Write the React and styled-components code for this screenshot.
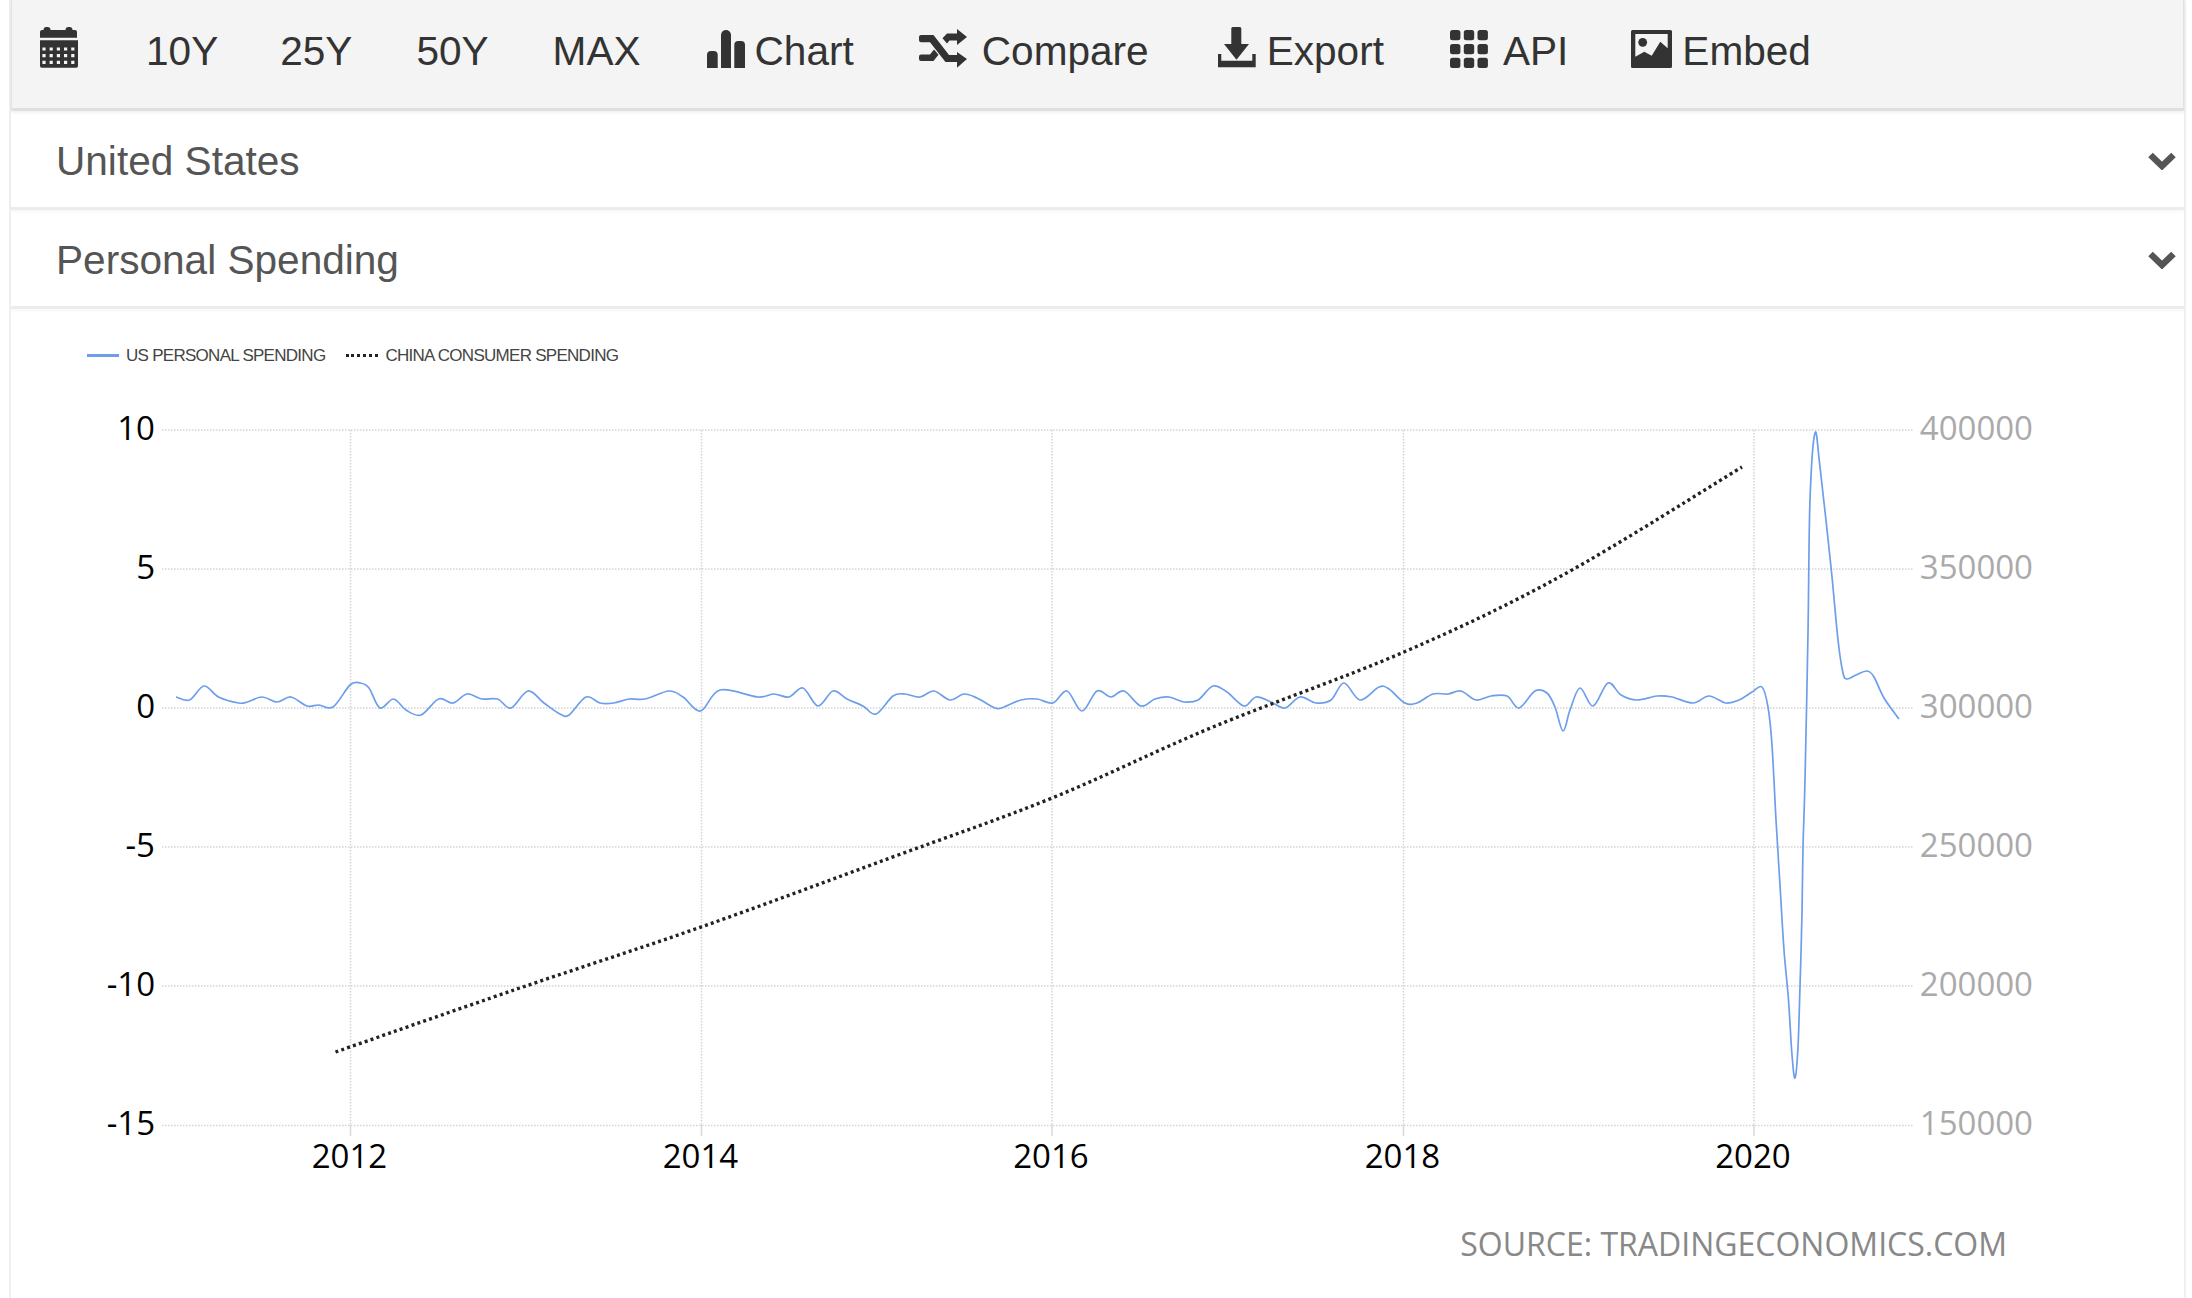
import React from "react";
import styled, { createGlobalStyle } from "styled-components";

const Global = createGlobalStyle`
  html, body { margin: 0; padding: 0; background: #fff; }
  * { box-sizing: border-box; }
`;

const Page = styled.div`
  width: 100%;
  height: 1298px;
  padding: 0 6px 0 9px;
  overflow: hidden;
  background: #fff;
  font-family: "Liberation Sans", Arial, sans-serif;
`;
const Panel = styled.div`
  height: 100%;
  border-left: 2px solid #f0f0f0;
  border-right: 2px solid #f0f0f0;
`;
const Toolbar = styled.nav`
  height: 111px;
  padding: 27px 0 0 28px;
  display: flex;
  gap: 64px;
  background: #f4f4f4;
  border-left: 1px solid #e2e2e2;
  border-right: 1px solid #e2e2e2;
  border-bottom: 3px solid #e0e0e0;
  box-shadow: 0 2px 3px rgba(0, 0, 0, 0.06);
  position: relative;
  color: #333;
`;
const ToolItem = styled.a`
  display: flex;
  align-items: flex-end;
  height: 41px;
  gap: ${(p) => p.$gap || 10}px;
  margin-right: ${(p) => p.$after || 0}px;
  white-space: nowrap;
`;
const ToolLabel = styled.span`
  align-self: flex-start;
  font-size: 40.6px;
  line-height: 49px;
  color: #333;
`;
const Row = styled.div`
  height: 99px;
  padding: 0 8px 0 45px;
  display: flex;
  align-items: center;
  justify-content: space-between;
  border-bottom: 3px solid #ececef;
  box-shadow: 0 2px 3px rgba(0, 0, 0, 0.03);
`;
const RowTitle = styled.span`
  font-size: 40.6px;
  line-height: 46px;
  margin-top: 4px;
  color: #555;
`;
const Chevron = styled.svg`
  display: block;
  margin-top: 4px;
`;
const ChartArea = styled.section`
  display: flex;
  flex-direction: column;
`;
const Legend = styled.div`
  display: flex;
  align-items: center;
  gap: 21px;
  height: 20px;
  margin: 37px 0 0 76px;
`;
const LegendItem = styled.div`
  display: flex;
  align-items: center;
  gap: 7px;
  font-size: 17px;
  line-height: 20px;
  color: #444;
  letter-spacing: -0.72px;
`;
const Swatch = styled.span`
  width: 32px;
  height: 0;
  margin-top: -1px;
  border-top: ${(p) => (p.$dotted ? "3px dotted #222" : "3px solid #6d9eeb")};
`;
const ChartSvg = styled.svg`
  display: block;
  margin-top: 9px;
`;
const Source = styled.div`
  margin-top: 34px;
  padding-right: 177px;
  text-align: right;
  font-family: "Open Sans", sans-serif;
  font-size: 32px;
  line-height: 40px;
  color: #888;
`;

const DARK = "#333";

const CalendarIcon = () => (
  <svg width="38" height="41" viewBox="0 0 38 41" fill={DARK}>
    <path d="M0 5a2 2 0 0 1 2-2h1.5V3a3 3 0 0 1 3-3h1a3 3 0 0 1 3 3h15a3 3 0 0 1 3-3h1a3 3 0 0 1 3 3h2.500a2 2 0 0 1 2 2v5.700H0z" />
    <path fillRule="evenodd" d={"M0 13.300h38V39a1.700 1.700 0 0 1-1.700 1.700H1.700A1.700 1.700 0 0 1 0 39z" + [22, 28.7, 35.4].map((y) => [4, 11.2, 18.4, 25.6, 32.8].map((x) => `M${x - 1.6} ${y - 1.6}h3.200v3.200h-3.200z`).join("")).join("")} />
  </svg>
);
const ChartIcon = () => (
  <svg width="38" height="38" viewBox="0 0 38 38" fill={DARK}>
    <path d="M0 38V25a4 4 0 0 1 4-4h2.700a4 4 0 0 1 4 4v13z" />
    <path d="M14 38V5a5 5 0 0 1 5-5a5 5 0 0 1 5 5v33z" />
    <path d="M27.300 38V15a4 4 0 0 1 4-4h2.700a4 4 0 0 1 4 4v23z" />
  </svg>
);
const CompareIcon = () => (
  <svg width="48" height="39" viewBox="0 0 48 39" fill={DARK}>
    <path d="M38 0l10 8-10 8V11.500h-7.500L28 14.500l-4.500-5.200L28 4.500h10z" />
    <path d="M38 23l10 7-10 8.700V33H26.500L11 13.300H2a2 2 0 0 1-2-2V8a2 2 0 0 1 2-2h12.500L30 26h8z" />
    <path d="M2 25.500h9l4-5 4.500 5.300L14.500 32H2a2 2 0 0 1-2-2v-2.500a2 2 0 0 1 2-2z" />
  </svg>
);
const ExportIcon = () => (
  <svg width="38" height="41" viewBox="0 0 38 41" fill={DARK}>
    <path d="M13.300 1.500a1.500 1.500 0 0 1 1.500-1.500h7a1.500 1.500 0 0 1 1.500 1.500V17H31L18.500 32.700 6 17h7.300z" />
    <path d="M0 27h3.300v6.700h31V27h3.400v13.300H0z" />
  </svg>
);
const ApiIcon = () => (
  <svg width="38" height="38" viewBox="0 0 38 38" fill={DARK}>
    {[0, 14, 27.7].map((y) =>
      [0, 13.8, 27.5].map((x) => <rect key={`${x}-${y}`} x={x} y={y} width="10.400" height="10.300" rx="2.500" />)
    )}
  </svg>
);
const EmbedIcon = () => (
  <svg width="41" height="38" viewBox="0 0 41 38" fill={DARK}>
    <path fillRule="evenodd" d="M1.500 0h38A1.500 1.500 0 0 1 41 1.500V36.500A1.500 1.500 0 0 1 39.500 38h-38A1.500 1.500 0 0 1 0 36.500V1.500A1.500 1.500 0 0 1 1.500 0zM4.300 4v22.700l9-5 7.400 4 8.600-14 7.400 6.600V4z" />
    <circle cx="11.700" cy="12.300" r="4.400" />
  </svg>
);
const ChevronIcon = () => (
  <Chevron width="28" height="18" viewBox="0 0 28 18">
    <path d="M2.500 3L14 14L25.500 3" fill="none" stroke="#555" strokeWidth="6.500" />
  </Chevron>
);

const blue = [
  [176, 697], [189.5, 700], [204, 686], [218.5, 697], [238.6, 703], [247.5, 702], [262, 697], [277, 702], [291, 697],
  [307, 706], [319, 705], [333, 707], [350, 685], [360, 683], [369, 688], [380, 708], [393.5, 699], [406, 710], [421, 715],
  [438.6, 699], [453, 703], [467, 694], [482, 699], [497.5, 699], [511, 708], [528, 691], [544, 703], [560, 714], [569, 715],
  [586, 697], [600, 703], [613.6, 703], [629, 699], [645, 699], [669, 691], [683, 697], [700.6, 711], [720, 690], [758, 697],
  [774, 694], [789, 697], [803, 688], [818, 706], [833, 691], [847, 699], [863, 706], [876, 714], [893, 696], [905, 694],
  [920, 697], [934, 691], [950, 700], [964, 694], [977, 698], [995, 708], [1004, 707], [1021, 700], [1037, 699], [1053, 703],
  [1067, 691], [1082, 711], [1097, 691], [1111, 697], [1124, 691], [1141, 706], [1155, 699], [1169, 697], [1184, 702],
  [1198, 700], [1213, 686], [1227, 692], [1244, 706], [1256, 697], [1271, 702], [1285, 708], [1300, 697], [1316, 703],
  [1331, 700], [1344, 683], [1360, 700], [1379, 687], [1389, 689], [1405, 703], [1417, 703], [1433, 694], [1448, 694],
  [1461, 691], [1476, 700], [1491, 696], [1507, 696], [1519, 708], [1535, 691], [1547, 693], [1555, 707], [1563, 731],
  [1570, 710], [1580, 688], [1593, 706], [1608, 683], [1621, 695], [1637, 700], [1657, 696], [1672, 697], [1693, 703],
  [1709, 696], [1726, 703], [1739, 700], [1752, 692], [1762, 687], [1768, 707], [1772, 745], [1776, 820], [1780, 885],
  [1784, 950], [1788.5, 1000], [1792, 1055], [1795, 1078], [1798, 1047], [1800, 987], [1802, 913], [1803, 847],
  [1805, 780], [1808, 633], [1810, 500], [1815, 433], [1820, 467], [1831, 567], [1838, 640], [1843, 673], [1847, 679],
  [1856, 675], [1867, 671], [1874, 677], [1884, 698], [1899, 719],
];
const black = [
  [335.5, 1052], [514, 990], [701, 927], [890, 858], [1052, 798], [1213, 727], [1404, 652], [1563, 575], [1742, 467],
];

// Smooth line through the sampled points (Catmull-Rom to Bezier).
const smooth = (pts, k = 6) => {
  let d = `M${pts[0][0]} ${pts[0][1]}`;
  for (let i = 0; i < pts.length - 1; i++) {
    const p0 = pts[i - 1] || pts[i];
    const p1 = pts[i];
    const p2 = pts[i + 1];
    const p3 = pts[i + 2] || p2;
    const c1 = [p1[0] + (p2[0] - p0[0]) / k, p1[1] + (p2[1] - p0[1]) / k];
    const c2 = [p2[0] - (p3[0] - p1[0]) / k, p2[1] - (p3[1] - p1[1]) / k];
    d += `C${c1[0].toFixed(1)} ${c1[1].toFixed(1)} ${c2[0].toFixed(1)} ${c2[1].toFixed(1)} ${p2[0]} ${p2[1]}`;
  }
  return d;
};

const rows = [
  { y: 430, left: "10", right: "400000" },
  { y: 569, left: "5", right: "350000" },
  { y: 708, left: "0", right: "300000" },
  { y: 847, left: "-5", right: "250000" },
  { y: 986, left: "-10", right: "200000" },
  { y: 1125.5, left: "-15", right: "150000" },
];
const years = [
  { x: 350.5, label: "2012" },
  { x: 701.5, label: "2014" },
  { x: 1052, label: "2016" },
  { x: 1403.5, label: "2018" },
  { x: 1754, label: "2020" },
];
const axisFont = { fontFamily: "'Open Sans', sans-serif", fontSize: 33 };

const Chart = () => (
  <ChartSvg width="2173" height="815" viewBox="11 375 2173 815">
    {rows.map((r) => (
      <g key={r.y}>
        <line x1="162" x2="1914" y1={r.y} y2={r.y} stroke="#d4d4d4" strokeWidth="1.500" strokeDasharray="1.500 1.500" />
        <text x="155" y={r.y + 9.5} textAnchor="end" fill="#000" style={axisFont}>{r.left}</text>
        <text x="2033" y={r.y + 9.5} textAnchor="end" fill="#aaa" style={axisFont}>{r.right}</text>
      </g>
    ))}
    {years.map((v) => (
      <g key={v.x}>
        <line x1={v.x} x2={v.x} y1="430" y2="1125" stroke="#d4d4d4" strokeWidth="1.500" strokeDasharray="1.500 1.500" />
        <line x1={v.x} x2={v.x} y1="1125" y2="1136" stroke="#d8d8d8" strokeWidth="1.500" />
        <text x={v.x - 1} y="1168" textAnchor="middle" fill="#000" style={axisFont}>{v.label}</text>
      </g>
    ))}
    <path d={smooth(blue)} fill="none" stroke="#6d9eeb" strokeWidth="1.700" />
    <path d={smooth(black)} fill="none" stroke="#222" strokeWidth="3.400" strokeDasharray="3 3.200" />
  </ChartSvg>
);

export default function App() {
  return (
    <Page>
      <Global />
      <Panel>
        <Toolbar>
          <ToolItem $after={4}><CalendarIcon /></ToolItem>
          <ToolItem $after={-2}><ToolLabel>10Y</ToolLabel></ToolItem>
          <ToolItem><ToolLabel>25Y</ToolLabel></ToolItem>
          <ToolItem><ToolLabel>50Y</ToolLabel></ToolItem>
          <ToolItem $after={2}><ToolLabel>MAX</ToolLabel></ToolItem>
          <ToolItem $after={1}><ChartIcon /><ToolLabel>Chart</ToolLabel></ToolItem>
          <ToolItem $gap={15} $after={5}><CompareIcon /><ToolLabel>Compare</ToolLabel></ToolItem>
          <ToolItem $gap={11} $after={2}><ExportIcon /><ToolLabel>Export</ToolLabel></ToolItem>
          <ToolItem $gap={15} $after={-1}><ApiIcon /><ToolLabel>API</ToolLabel></ToolItem>
          <ToolItem $gap={10}><EmbedIcon /><ToolLabel>Embed</ToolLabel></ToolItem>
        </Toolbar>
        <Row>
          <RowTitle>United States</RowTitle>
          <ChevronIcon />
        </Row>
        <Row>
          <RowTitle>Personal Spending</RowTitle>
          <ChevronIcon />
        </Row>
        <ChartArea>
          <Legend>
            <LegendItem><Swatch />US PERSONAL SPENDING</LegendItem>
            <LegendItem><Swatch $dotted />CHINA CONSUMER SPENDING</LegendItem>
          </Legend>
          <Chart />
          <Source>SOURCE: TRADINGECONOMICS.COM</Source>
        </ChartArea>
      </Panel>
    </Page>
  );
}
